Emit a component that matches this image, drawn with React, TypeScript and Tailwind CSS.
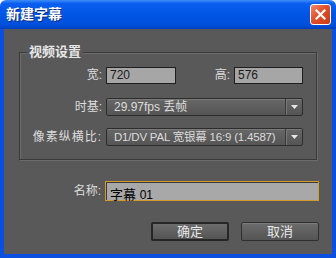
import React from 'react';

const font = "font-['Liberation_Sans','Noto_Sans_CJK_SC',sans-serif]";

function Dropdown({ value, small }: { value: string; small?: boolean }) {
    return (
        <div className="ml-[4px] flex h-[18px] w-[197px] items-center rounded-[2px] border border-[#2c2c2c] bg-[linear-gradient(#676767,#555555)] shadow-[inset_0_1px_0_#7a7a7a]">
            <span className={`flex-1 whitespace-nowrap pl-[7px] leading-[16px] text-[#dcdcdc] ${small ? 'text-[11.5px] tracking-[-0.2px]' : 'text-[12px]'}`}>{value}</span>
            <div className="flex h-full w-[17px] shrink-0 items-center justify-center border-l border-[#3a3a3a] shadow-[inset_1px_0_0_#767676]">
                <svg width="7" height="4" viewBox="0 0 7 4"><path d="M0 0h7L3.5 4z" fill="#e6e6e6" /></svg>
            </div>
        </div>
    );
}

export default function App() {
    return (
        <div className={`flex h-[258px] w-[336px] flex-col ${font} select-none`}>
            <div className="flex h-[29px] shrink-0 items-center justify-between rounded-t-[6px] bg-[linear-gradient(#3d8cf8,#0a5ff0_12%,#0055e5_50%,#0050dc_85%,#0040c0)] pl-[6px] pr-[5px]">
                <span className="text-[14px] font-bold text-white [text-shadow:1px_1px_0_#0a2a7a]">新建字幕</span>
                <button className="flex h-[21px] w-[21px] items-center justify-center rounded-[3px] border border-white bg-[linear-gradient(135deg,#f08a6a,#e0502a_45%,#c83a15)]">
                    <svg width="11" height="11" viewBox="0 0 11 11"><path d="M1.5 1.5l8 8M9.5 1.5l-8 8" stroke="white" strokeWidth="2.2" strokeLinecap="square" /></svg>
                </button>
            </div>
            <div className="flex flex-1 flex-col border-x-4 border-b-4 border-[#0a4fe0] bg-[#595959]">
                <div className="mx-[15px] mt-[23px] flex h-[108px] flex-col border border-[#3a3a3a] shadow-[1px_1px_0_#6c6c6c,inset_1px_1px_0_#6c6c6c]">
                    <span className="-mt-[9px] ml-[7px] self-start bg-[#595959] px-[2px] text-[13px] font-bold leading-[16px] text-[#e6e6e6]">视频设置</span>
                    <div className="mt-[6px] flex items-center">
                        <span className="w-[82px] text-right text-[12px] text-[#dcdcdc]">宽:</span>
                        <div className="ml-[4px] h-[17px] w-[70px] border border-[#1e1e1e] bg-[#a6a6a6] pl-[3px] text-[12px] leading-[15px] text-[#1a1a1a]">720</div>
                        <span className="w-[54px] text-right text-[12px] text-[#dcdcdc]">高:</span>
                        <div className="ml-[4px] h-[17px] w-[69px] border border-[#1e1e1e] bg-[#a6a6a6] pl-[3px] text-[12px] leading-[15px] text-[#1a1a1a]">576</div>
                    </div>
                    <div className="mt-[14px] flex items-center">
                        <span className="w-[82px] text-right text-[12px] text-[#dcdcdc]">时基:</span>
                        <Dropdown value="29.97fps 丢帧" />
                    </div>
                    <div className="mt-[12px] flex items-center">
                        <span className="w-[82px] text-right text-[12px] tracking-[1px] text-[#dcdcdc]">像素纵横比:</span>
                        <Dropdown value="D1/DV PAL 宽银幕 16:9 (1.4587)" small />
                    </div>
                </div>
                <div className="mt-[21px] flex items-center">
                    <span className="w-[97px] text-right text-[12px] text-[#dcdcdc]">名称:</span>
                    <div className="ml-[4px] h-[20px] w-[214px] border border-[#d49a2e] bg-[#a8a8a8] shadow-[inset_1px_1px_0_#3a3a3a]">
                        <span className="pl-[4px] text-[13px] leading-[18px] text-black">字幕 <span className="text-[12px]">01</span></span>
                    </div>
                </div>
                <div className="mt-[21px] flex justify-end gap-[12px] pr-[13px]">
                    <button className="h-[19px] w-[78px] rounded-[2px] border-2 border-[#262626] bg-[linear-gradient(#6c6c6c,#545454)] text-[13px] leading-[15px] text-[#e8e8e8]">确定</button>
                    <button className="h-[19px] w-[78px] rounded-[2px] border border-[#2e2e2e] bg-[linear-gradient(#6c6c6c,#545454)] shadow-[inset_0_1px_0_#7c7c7c] text-[13px] leading-[17px] text-[#e8e8e8]">取消</button>
                </div>
            </div>
        </div>
    );
}
